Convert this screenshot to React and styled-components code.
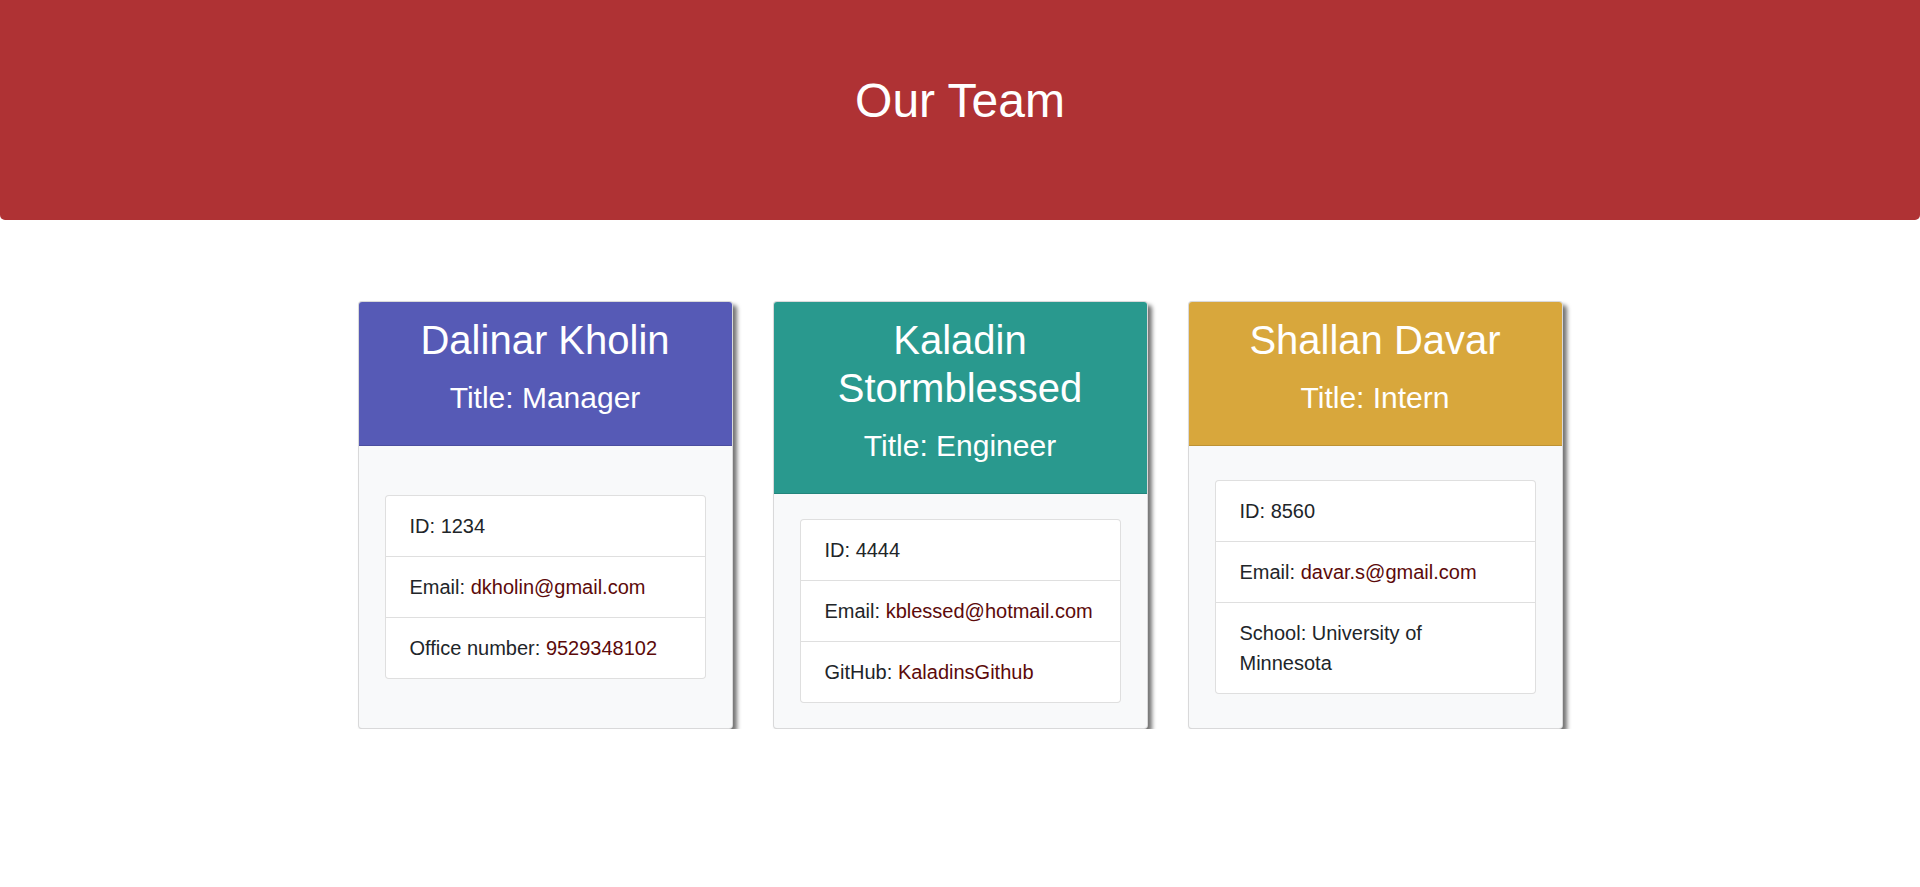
import React from "react";
import styled, {createGlobalStyle} from "styled-components";

//Global page reset
const GlobalStyle = createGlobalStyle`
  * {
    box-sizing: border-box;
  }
  body {
    margin: 0;
    background: #fff;
    font-family: "Liberation Sans", Arial, sans-serif;
    color: #212529;
  }
`

//Styled Components
const Banner = styled.header`
  height: 220px;
  padding-top: 72px;
  background: #af3234;
  border-radius: 0 0 5px 5px;
  text-align: center;
`

const BannerTitle = styled.h1`
  margin: 0;
  font-size: 48px;
  font-weight: 400;
  line-height: 1.2;
  color: #fff;
`

const CardRow = styled.main`
  display: flex;
  justify-content: center;
  align-items: stretch;
  gap: 40px;
  padding-top: 81px;
`

const Card = styled.section`
  display: flex;
  flex-direction: column;
  width: 375px;
  border: 1px solid rgba(0, 0, 0, .125);
  border-radius: 4px;
  overflow: hidden;
  background: #f8f9fa;
  box-shadow: 4px 4px 4px rgba(0, 0, 0, .55);
`

const CardHeader = styled.div`
  padding: 14px 20px 29px;
  background: ${props => props.color};
  border-bottom: 1px solid rgba(0, 0, 0, .125);
  color: #fff;
  text-align: center;
`

const Name = styled.h2`
  margin: 0 0 16px;
  font-size: 40px;
  font-weight: 400;
  line-height: 1.2;
`

const Role = styled.h3`
  margin: 0;
  font-size: 30px;
  font-weight: 400;
  line-height: 36px;
`

const CardBody = styled.div`
  flex: 1;
  display: flex;
  align-items: center;
  padding: 25px 26px;
`

const InfoList = styled.ul`
  width: 100%;
  margin: 0;
  padding: 0;
  list-style: none;
  background: #fff;
  border: 1px solid rgba(0, 0, 0, .125);
  border-radius: 4px;
`

const InfoItem = styled.li`
  padding: 15px 24px;
  font-size: 20px;
  line-height: 30px;
  color: #212529;

  & + & {
    border-top: 1px solid rgba(0, 0, 0, .125);
  }
`

const Value = styled.span`
  color: ${props => props.accent ? "#5c0a0a" : "inherit"};
`

const team = [
    {
        name: "Dalinar Kholin",
        title: "Manager",
        color: "#565ab6",
        info: [
            {label: "ID", value: "1234"},
            {label: "Email", value: "dkholin@gmail.com", accent: true},
            {label: "Office number", value: "9529348102", accent: true},
        ]
    },
    {
        name: "Kaladin Stormblessed",
        title: "Engineer",
        color: "#29998e",
        info: [
            {label: "ID", value: "4444"},
            {label: "Email", value: "kblessed@hotmail.com", accent: true},
            {label: "GitHub", value: "KaladinsGithub", accent: true},
        ]
    },
    {
        name: "Shallan Davar",
        title: "Intern",
        color: "#d8a73c",
        info: [
            {label: "ID", value: "8560"},
            {label: "Email", value: "davar.s@gmail.com", accent: true},
            {label: "School", value: "University of Minnesota"},
        ]
    }
];

function MemberCard({member}) {
    return (
        <Card>
            <CardHeader color={member.color}>
                <Name>{member.name}</Name>
                <Role>Title: {member.title}</Role>
            </CardHeader>
            <CardBody>
                <InfoList>
                    {member.info.map(item => (
                        <InfoItem key={item.label}>
                            {item.label}: <Value accent={item.accent}>{item.value}</Value>
                        </InfoItem>
                    ))}
                </InfoList>
            </CardBody>
        </Card>
    );
}

function App() {
    return (
        <>
            <GlobalStyle/>
            <Banner>
                <BannerTitle>Our Team</BannerTitle>
            </Banner>
            <CardRow>
                {team.map(member => (
                    <MemberCard key={member.name} member={member}/>
                ))}
            </CardRow>
        </>
    );
}

export default App
